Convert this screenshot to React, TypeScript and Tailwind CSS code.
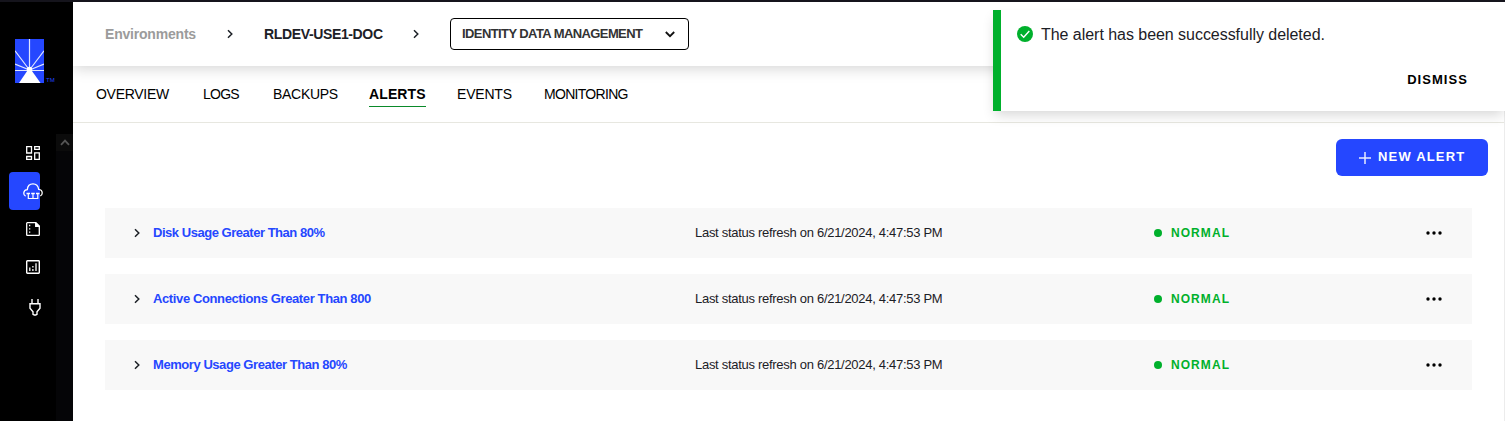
const tabs = [
  { label: 'OVERVIEW', box: 'w-[107px]', text: 'tracking-[-0.29px]' },
  { label: 'LOGS', box: 'w-[70px]', text: 'tracking-[-0.75px]' },
  { label: 'BACKUPS', box: 'w-24', text: 'tracking-[-0.29px]' },
  { label: 'ALERTS', box: 'w-[88px]', text: 'tracking-[0.12px] font-bold border-b border-[#0a8a2a]' },
  { label: 'EVENTS', box: 'w-[87px]', text: 'tracking-[-0.2px]' },
  { label: 'MONITORING', box: 'w-[90px]', text: 'tracking-[-0.7px]' },
];

const alerts = [
  { name: 'Disk Usage Greater Than 80%', tracking: 'tracking-[-0.47px]' },
  { name: 'Active Connections Greater Than 800', tracking: 'tracking-[-0.38px]' },
  { name: 'Memory Usage Greater Than 80%', tracking: 'tracking-[-0.44px]' },
];

function Chevron({ className = '' }: { className?: string }) {
  return (
    <svg width="8" height="10" viewBox="0 0 8 10" fill="none" stroke="#1c2026" strokeWidth="1.5" className={`shrink-0 ${className}`}>
      <path d="M2 1.2 5.8 5 2 8.8" />
    </svg>
  );
}

function Logo() {
  return (
    <svg width="29" height="44" viewBox="0 0 29 44" className="block shrink-0">
      <rect width="29" height="44" fill="#2547ff" />
      <g stroke="#dfe5ff" strokeWidth="1.2">
        <path d="M14.5 0V31M14.5 31 0 11.8M14.5 31 29 11.8M14.5 31 0 25M14.5 31 29 25M0 31.5H29" />
      </g>
      <path d="M14.5 28.5 25.5 44H4Z" fill="#fff" />
      <circle cx="14.5" cy="30.5" r="2.7" fill="#fff" />
    </svg>
  );
}

function DashboardIcon() {
  return (
    <svg width="14" height="14" viewBox="0 0 14 14" fill="none" stroke="#fff" strokeWidth="1.3">
      <path d="M.7.7h4.8v6.300H.7zM8.700.7h4.600v2.600H8.700zM.7 10.500h4.800v2.800H.7zM8.700 6.900h4.600v6.400H8.700z" />
    </svg>
  );
}

function CloudIcon() {
  return (
    <svg width="20" height="17" viewBox="0 0 20 17" fill="none" stroke="#fff" strokeWidth="1.3">
      <path d="M2.6 13.1C1 12.3.7 11 .8 9.8 1 8 2.4 6.7 4.3 6.6 4.6 3 6.9.8 10 .8c3 0 5.200 2.100 5.700 5.500 2 .2 3.400 1.500 3.500 3.400.1 1.300-.5 2.600-1.900 3.300" />
      <path d="M3.500 10.500H7M8.200 10.500h3.600M13 10.500h3.500" strokeWidth="1.600" />
      <path d="M5.300 11v4.500h9.500V11M10 11v4.500" strokeWidth="1.200" />
    </svg>
  );
}

function NotesIcon() {
  return (
    <svg width="14" height="14" viewBox="0 0 14 14" fill="none" stroke="#fff" strokeWidth="1.300">
      <path d="M9.700.7H1.300a.6.6 0 0 0-.6.6v11.400c0 .3.300.6.6.6h11.400a.6.6 0 0 0 .6-.6V4.300Z" />
      <path d="M9.700.7v3.600h3.600Z" fill="#fff" />
      <path d="M3 3.500h1.300M3 6.800h1.300M3 10.200h1.300" />
    </svg>
  );
}

function ChartIcon() {
  return (
    <svg width="14" height="14" viewBox="0 0 14 14" fill="none" stroke="#fff">
      <rect x=".7" y=".7" width="12.600" height="12.600" rx=".7" strokeWidth="1.400" />
      <path d="M3.800 7.500V11M6.900 9v2M6.900 6v1.500M10 3.300V11" strokeWidth="1.300" />
    </svg>
  );
}

function PlugIcon() {
  return (
    <svg width="12" height="17" viewBox="0 0 12 17" fill="none" stroke="#fff" strokeWidth="1.400">
      <path d="M3 0v4.500M9 0v4.500M1 4.700h10v4.600l-3 3.500v2.500L6.700 16H5.300L4 15.300v-2.500L1 9.300Z" />
    </svg>
  );
}

function Sidebar() {
  return (
    <aside className="flex w-[73px] shrink-0 flex-col bg-black">
      <div className="flex h-[132px] items-start pt-[37px] pl-[15px]">
        <Logo />
        <span className="mt-[38px] ml-[2px] text-[6px] leading-[7px] text-[#2547ff]">TM</span>
      </div>
      <div className="flex flex-1 justify-between">
        <nav className="flex w-10 flex-col pl-[9px]">
          <a className="flex h-[38px] items-center pl-[17px]"><DashboardIcon /></a>
          <a className="flex h-[38px] w-[31px] items-center rounded-[4px] bg-[#2547ff] pl-[14px]">
            <span className="shrink-0"><CloudIcon /></span>
          </a>
          <a className="flex h-[38px] items-center pl-[17px]"><NotesIcon /></a>
          <a className="flex h-[38px] items-center pl-[17px]"><ChartIcon /></a>
          <a className="flex h-[42px] items-center pl-5"><span className="shrink-0"><PlugIcon /></span></a>
        </nav>
        <div className="w-[17px] bg-[#050507]">
          <div className="flex h-[17px] items-center justify-center bg-[#0b0b0b]">
            <svg width="10" height="7" viewBox="0 0 10 7" fill="none" stroke="#555" strokeWidth="1.800">
              <path d="M1 5.800 5 1.600 9 5.800" />
            </svg>
          </div>
        </div>
      </div>
    </aside>
  );
}

function Header() {
  return (
    <header className="relative z-10 flex h-16 shrink-0 items-center bg-white pl-8 text-sm font-bold shadow-[0_2px_14px_rgba(0,0,0,0.18)]">
      <span className="w-[121px] tracking-[-0.2px] text-[#9b9b9b]">Environments</span>
      <Chevron className="mr-[30px]" />
      <span className="w-[148px] tracking-[-0.36px] text-[#1c2026]">RLDEV-USE1-DOC</span>
      <Chevron className="mr-[30px]" />
      <button className="flex h-8 w-[239px] items-center justify-between rounded-[4px] border border-black pr-[13px] pl-[11px] text-[13px] font-bold text-[#333]">
        <span className="tracking-[-0.59px]">IDENTITY DATA MANAGEMENT</span>
        <svg width="10" height="7" viewBox="0 0 10 7" fill="none" stroke="#111" strokeWidth="1.800">
          <path d="M.8 1 5 5.200 9.200 1" />
        </svg>
      </button>
    </header>
  );
}

function Toast() {
  return (
    <div className="absolute top-2 right-0 z-20 flex h-[101px] w-[512px] flex-col border-l-8 border-[#00b02c] bg-white pt-[15px] pr-[38px] pl-4 shadow-[0_6px_12px_-2px_rgba(0,0,0,0.16)]">
      <div className="flex h-[18px] items-center gap-2">
        <svg width="16" height="16" viewBox="0 0 16 16">
          <circle cx="8" cy="8" r="8" fill="#00b02c" />
          <path d="M3.700 8.300 6.700 11.200 12.300 5" fill="none" stroke="#fff" strokeWidth="1.400" />
        </svg>
        <span className="pt-px text-base leading-5 tracking-[-0.04px] text-[#1c2026]">The alert has been successfully deleted.</span>
      </div>
      <button className="mt-[27px] -mr-px self-end text-[13px] leading-5 font-bold tracking-[1.06px] text-black">DISMISS</button>
    </div>
  );
}

export default function App() {
  return (
    <div className="relative flex h-[421px] w-[1505px] flex-col overflow-hidden border-t-2 border-[#15141c] bg-white font-['Liberation_Sans',Arial,sans-serif]">
      <div className="flex flex-1">
        <Sidebar />
        <div className="flex flex-1 flex-col">
          <Header />
          <div className="flex flex-1 flex-col border-r border-[#ececec]">
            <nav className="flex h-[57px] items-start border-b border-[#e7e7e0] pt-[18px] pl-[23px] text-sm leading-5 text-black">
              {tabs.map((tab) => (
                <div key={tab.label} className={`shrink-0 ${tab.box}`}>
                  <a className={`inline-block h-[23px] whitespace-nowrap ${tab.text}`}>{tab.label}</a>
                </div>
              ))}
            </nav>
            <main className="flex flex-1 flex-col pt-4 pr-8 pl-8 text-[13px]">
              <button className="-mr-4 flex h-[37px] w-[152px] items-center gap-[7px] self-end rounded-[6px] bg-[#2547ff] pl-[23px] font-bold tracking-[1.17px] text-white">
                <svg width="12" height="12" viewBox="0 0 12 12" stroke="#e8ecff" strokeWidth="1.500">
                  <path d="M6 0v12M0 6h12" />
                </svg>
                <span className="pb-0.5 whitespace-nowrap">NEW ALERT</span>
              </button>
              <ul className="mt-8 flex flex-col gap-4">
                {alerts.map((alert) => (
                  <li key={alert.name} className="flex h-[50px] items-center bg-[#f8f8f8] pl-7">
                    <Chevron className="mr-3" />
                    <span className="w-[542px]">
                      <a className={`font-bold text-[#2547ff] ${alert.tracking}`}>{alert.name}</a>
                    </span>
                    <span className="w-[459px] tracking-[-0.29px] text-[#1c2026]">Last status refresh on 6/21/2024, 4:47:53 PM</span>
                    <span className="flex w-[272px] items-center gap-[9px] text-xs font-bold tracking-[1.060px] text-[#00b02c]">
                      <i className="size-2 rounded-full bg-[#00b02c]" />
                      NORMAL
                    </span>
                    <svg width="16" height="4" viewBox="0 0 16 4" className="shrink-0">
                      <circle cx="2" cy="2" r="1.700" />
                      <circle cx="8" cy="2" r="1.700" />
                      <circle cx="14" cy="2" r="1.700" />
                    </svg>
                  </li>
                ))}
              </ul>
            </main>
          </div>
        </div>
      </div>
      <Toast />
    </div>
  );
}
